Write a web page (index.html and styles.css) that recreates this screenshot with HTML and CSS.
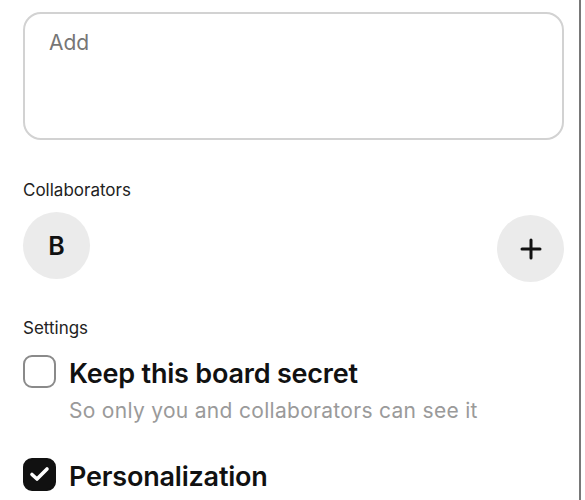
FILE: index.html
```html
<!DOCTYPE html>
<html>
<head>
<meta charset="utf-8">
<link rel="stylesheet" href="styles.css">
</head>
<body>
<div class="page">
  <div class="notes"><span class="placeholder">Add</span></div>

  <div class="section-label collab-label">Collaborators</div>
  <div class="collab-row">
    <div class="avatar">B</div>
    <div class="add-btn">
      <svg width="22" height="22" viewBox="0 0 22 22"><path d="M11 2v18M2 11h18" stroke="#111" stroke-width="3" stroke-linecap="round"/></svg>
    </div>
  </div>

  <div class="section-label settings-label">Settings</div>
  <div class="option">
    <div class="check"></div>
    <div class="option-text">
      <div class="option-title">Keep this board secret</div>
      <div class="option-desc">So only you and collaborators can see it</div>
    </div>
  </div>
  <div class="option option-2">
    <div class="check checked">
      <svg width="33" height="33" viewBox="0 0 33 33"><path d="M9 16.5l5 4.5 10-10" fill="none" stroke="#fff" stroke-width="3.6" stroke-linecap="round" stroke-linejoin="round"/></svg>
    </div>
    <div class="option-text">
      <div class="option-title">Personalization</div>
    </div>
  </div>
</div>
</body>
</html>
```

FILE: styles.css
```css
html, body {
  margin: 0;
  padding: 0;
  background: #fff;
  height: 100%;
}
body {
  font-family: Inter, "Noto Sans", sans-serif;
  color: #111;
}
.page {
  box-sizing: border-box;
  width: 581px;
  height: 500px;
  overflow: hidden;
  border-right: 2px solid #787878;
  padding: 12px 15px 0 23px;
}
.notes {
  box-sizing: border-box;
  height: 128px;
  border: 2px solid #d2d2d2;
  border-radius: 18px;
  padding: 18px 24px;
}
.placeholder {
  font-size: 21px;
  line-height: 1;
  color: #767676;
}
.section-label {
  font-size: 17px;
  line-height: 1;
  color: #222;
}
.collab-label {
  margin-top: 42px;
}
.collab-row {
  display: flex;
  justify-content: space-between;
  align-items: flex-start;
  margin-top: 13px;
}
.avatar, .add-btn {
  width: 67px;
  height: 67px;
  border-radius: 50%;
  background: #ebebeb;
  display: flex;
  align-items: center;
  justify-content: center;
}
.avatar {
  font-size: 25px;
  font-weight: 600;
}
.add-btn {
  margin-top: 3px;
}
.settings-label {
  margin-top: 38px;
}
.option {
  display: flex;
  gap: 13px;
  margin-top: 18px;
}
.option-2 {
  margin-top: 35px;
}
.option-text {
  padding-top: 2px;
}
.check {
  flex: none;
  box-sizing: border-box;
  width: 33px;
  height: 33px;
  border: 2.5px solid #8a8a8a;
  border-radius: 9px;
}
.check.checked {
  background: #111;
  border-color: #111;
  position: relative;
}
.check.checked svg {
  position: absolute;
  left: -2.5px;
  top: -2.5px;
}
.option-title {
  font-size: 27px;
  font-weight: 600;
  line-height: 33px;
  letter-spacing: -0.2px;
}
.option-desc {
  font-size: 21px;
  line-height: 24px;
  color: #9a9a9a;
  margin-top: 9px;
  letter-spacing: 0.3px;
}
```
